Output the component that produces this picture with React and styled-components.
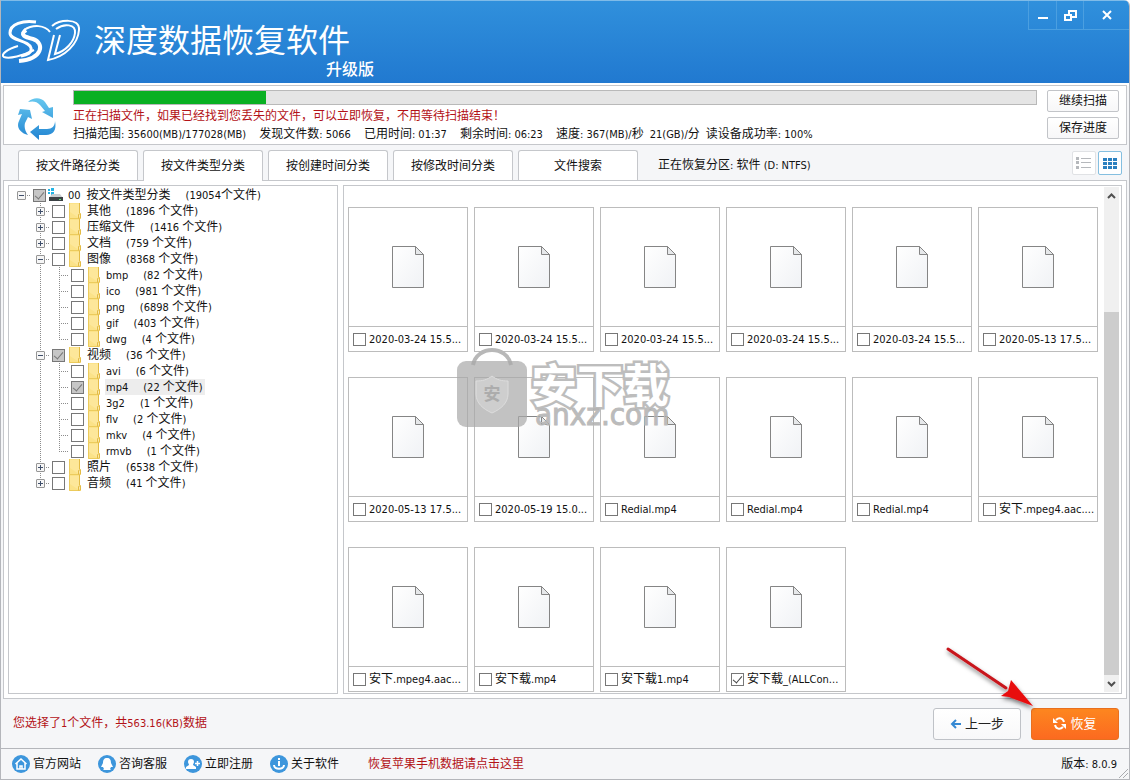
import React from "react";
import styled, { createGlobalStyle } from "styled-components";

const GlobalStyle = createGlobalStyle`
  * {
    box-sizing: border-box;
  }

  body {
    margin: 0;
    color: #111111;
    font-family: "DejaVu Sans Condensed", "Noto Sans CJK SC", sans-serif;
    font-size: 12px;
    line-height: 16px;
  }

  button, input {
    font: inherit;
    color: inherit;
    margin: 0;
    padding: 0;
  }
`;

const Window = styled.div`
  min-height: 100vh;
  display: flex;
  flex-direction: column;
  border: 1px solid #b4b6bb;
  border-top: 0;
  border-radius: 0 6px 0 0;
  background-color: #f5f6f8;
  overflow: hidden;
`;

const Header = styled.header`
  display: flex;
  align-items: flex-start;
  height: 83px;
  border-top: 1px solid #7fbbe8;
  background: linear-gradient(#3090dc, #2179d0);
  color: #ffffff;
`;

const Logo = styled.svg`
  width: 80px;
  height: 44px;
  margin-top: 18px;
`;

const Brand = styled.div`
  display: flex;
  flex-direction: column;
  width: 280px;
  margin: 17px 0 0 13px;
  font-family: "Noto Sans CJK SC", sans-serif;
`;

const Title = styled.h1`
  margin: 0;
  font-size: 32px;
  font-weight: 400;
  line-height: 40px;
`;

const Subtitle = styled.span`
  align-self: flex-end;
  font-size: 16px;
  font-weight: 500;
  line-height: 20px;
`;

const WindowButtons = styled.div`
  display: flex;
  margin-left: auto;
  border: 1px solid #4b9fe0;
  border-width: 0 0 1px 1px;
`;

const WindowButton = styled.button`
  display: grid;
  place-items: center;
  width: ${(props) => (props.$wide ? 46 : 27)}px;
  height: 28px;
  border: 0;
  border-left: ${(props) => (props.$first ? "0" : "1px solid #4b9fe0")};
  background: none;
  color: #ffffff;
`;

const Main = styled.main`
  flex: 1;
  display: flex;
  flex-direction: column;
  padding: 2px 2px 0;
  background: linear-gradient(#ffffff 0 3px, #f5f6f8 3px);
`;

const ScanPanel = styled.section`
  display: flex;
  padding: 4px 7px 1px 0;
  border: 1px solid #c5c7cb;
  background-color: #ffffff;
`;

const RecycleIcon = styled.svg`
  width: 40px;
  height: 42px;
  margin: 8px 16px 0 13px;
`;

const ScanBody = styled.div`
  flex: 1;
  min-width: 0;
`;

const Progress = styled.div`
  height: 15px;
  border: 1px solid #b9b9b9;
  background-color: #e5e5e5;
`;

const ProgressFill = styled.div`
  height: 100%;
  background-color: #09b022;
`;

const ScanNotice = styled.p`
  height: 18px;
  margin: 2px 0 0;
  line-height: 18px;
  color: #b31217;
`;

const ScanStats = styled.div`
  display: flex;
  gap: ${(props) => (props.$tight ? 6 : 13)}px;
  height: 18px;
  line-height: 18px;
  white-space: nowrap;
`;

const ScanActions = styled.div`
  display: flex;
  flex-direction: column;
  gap: 5px;
  margin-left: 10px;
`;

const SmallButton = styled.button`
  width: 72px;
  height: 22px;
  border: 1px solid #c2c4c8;
  border-radius: 2px;
  background: linear-gradient(#ffffff, #f7f7f8);
`;

const TabBar = styled.div`
  display: flex;
  align-items: flex-end;
  height: 35px;
  padding: 5px 5px 0 15px;
`;

const Tabs = styled.div`
  display: flex;
  gap: 5px;
`;

const Tab = styled.button`
  position: relative;
  width: 120px;
  height: ${(props) => (props.$active ? 31 : 30)}px;
  margin-bottom: ${(props) => (props.$active ? -1 : 0)}px;
  padding-bottom: ${(props) => (props.$active ? 1 : 0)}px;
  border: 1px solid #c5c7cb;
  border-bottom: 0;
  border-radius: 3px 3px 0 0;
  background-color: #ffffff;
`;

const Partition = styled.span`
  align-self: center;
  margin-left: 20px;
  white-space: nowrap;
`;

const ViewButtons = styled.div`
  display: flex;
  gap: 2px;
  align-self: flex-start;
  margin-left: auto;
  padding-top: 1px;
`;

const ViewButton = styled.button`
  display: grid;
  place-items: center;
  width: 24px;
  height: 24px;
  border: 1px solid ${(props) => (props.$active ? "#84bfe0" : "#e0e2e5")};
  border-radius: 2px;
  background-color: #ffffff;
`;

const Content = styled.section`
  flex: 1;
  display: flex;
  gap: 5px;
  padding: 4px;
  border: 1px solid #c5c7cb;
  background-color: #ffffff;
`;

const TreePanel = styled.div`
  flex: 0 0 330px;
  padding: 1px 3px;
  border: 1px solid #c5c7cb;
`;

const Tree = styled.ul`
  margin: 0;
  padding: 0;
  list-style: none;
`;

const TreeRow = styled.li`
  display: flex;
  align-items: center;
  height: 16px;
  white-space: nowrap;
`;

const dots = (dir) =>
  `repeating-linear-gradient(${dir}, #8c8c8c 0 1px, transparent 1px 2px)`;

const Guide = styled.span`
  flex: none;
  display: grid;
  align-items: center;
  width: 19px;
  height: 16px;
  padding-left: 5px;
  background-image: ${(props) => (props.$line ? dots("180deg") : "none")},
    ${(props) => (props.$branch ? dots("90deg") : "none")};
  background-size: 1px ${(props) => (props.$line === "half" ? 8 : 16)}px,
    10px 1px;
  background-position: 9px 0, 9px 8px;
  background-repeat: no-repeat;
`;

const Toggle = styled.button`
  display: block;
  width: 9px;
  height: 9px;
  border: 1px solid #969696;
  border-radius: 1px;
  background: linear-gradient(#3f4f6b, #3f4f6b) 1px 3px / 5px 1px no-repeat,
    linear-gradient(#3f4f6b, #3f4f6b) 3px 1px / 1px
      ${(props) => (props.$open ? 0 : 5)}px no-repeat,
    #f6f6f6;
`;

const TreeLabel = styled.label`
  display: flex;
  align-items: center;
  height: 16px;
`;

const Checkbox = styled.input`
  flex: none;
  display: grid;
  place-items: center;
  appearance: none;
  width: 13px;
  height: 13px;
  border: 1px solid #777777;
  background-color: ${(props) => (props.$partial ? "#c6c6c6" : "#ffffff")};

  &:checked::after {
    content: "";
    width: 4px;
    height: 8px;
    margin-top: -2px;
    border: solid ${(props) => (props.$partial ? "#777777" : "#444444")};
    border-width: 0 1px 1px 0;
    transform: rotate(40deg);
  }
`;

const TreeCheckbox = styled(Checkbox)`
  margin-left: 2px;
`;

const NodeIcon = styled.svg`
  flex: none;
  width: 16px;
  height: 16px;
  margin: 0 3px 0 2px;
`;

const NodeText = styled.span`
  display: flex;
  gap: ${(props) => (props.$root ? 6 : 15)}px;
  height: 16px;
  padding: 0 2px 0 1px;
  background-color: ${(props) => (props.$selected ? "#ededed" : "transparent")};
`;

const NodeCount = styled.span`
  margin-left: ${(props) => (props.$root ? 9 : 0)}px;
`;

const Latin = styled.span`
  font-size: 11px;
`;

const FilePanel = styled.div`
  position: relative;
  flex: 1;
  display: flex;
  padding: 1px 2px 1px 0;
  border: 1px solid #c5c7cb;
`;

const FileGrid = styled.div`
  flex: 1;
  display: grid;
  grid-template-columns: repeat(auto-fill, 120px);
  align-content: start;
  gap: 25px 6px;
  padding: 20px 4px 0;
`;

const FileCard = styled.label`
  display: flex;
  flex-direction: column;
  height: 145px;
  border: 1px solid #bcbcbc;
`;

const Preview = styled.span`
  flex: 1;
  display: grid;
  place-items: center;
  border-bottom: 1px solid #bcbcbc;
`;

const FileName = styled.span`
  display: flex;
  align-items: center;
  gap: 3px;
  height: 24px;
  padding-left: 4px;
  white-space: nowrap;
`;

const ScrollBar = styled.div`
  display: flex;
  flex-direction: column;
  width: 15px;
  background-color: #f0f0f0;
`;

const ScrollButton = styled.button`
  display: grid;
  place-items: center;
  height: 17px;
  border: 0;
  background: none;
`;

const ScrollTrack = styled.div`
  flex: 1;
  display: flex;
  align-items: flex-end;
`;

const ScrollThumb = styled.div`
  width: 100%;
  background-color: #cdcdcd;
`;

const Watermark = styled.div`
  position: absolute;
  top: 162px;
  left: 113px;
  display: flex;
  gap: 4px;
  pointer-events: none;
`;

const WatermarkText = styled.div`
  display: flex;
  flex-direction: column;
  padding-top: 10px;
  color: rgba(170, 170, 170, 0.8);
`;

const WatermarkName = styled.span`
  font-family: "Noto Sans CJK SC", sans-serif;
  font-size: 46px;
  font-weight: 700;
  line-height: 48px;
  color: #ffffff;
  paint-order: stroke;
  stroke-linejoin: round;
  -webkit-text-stroke: 5px #bdbdbd;
`;

const WatermarkUrl = styled.span`
  padding-left: 4px;
  font-size: 31px;
  line-height: 16px;
  -webkit-text-stroke: 1px #bbbbbb;
`;

const ActionBar = styled.div`
  position: relative;
  display: flex;
  align-items: center;
  gap: 10px;
  height: 49px;
  padding: 0 8px 0 10px;
`;

const Selection = styled.span`
  margin-right: auto;
  color: #b31217;
`;

const ActionButton = styled.button`
  display: flex;
  align-items: center;
  justify-content: center;
  gap: 4px;
  width: 88px;
  height: 32px;
  border: 1px solid ${(props) => (props.$primary ? "#e8701f" : "#bfc2c7")};
  border-radius: 3px;
  background: ${(props) =>
    props.$primary
      ? "linear-gradient(#fd861f, #fc6a20)"
      : "linear-gradient(#ffffff, #f8f8f9)"};
  color: ${(props) => (props.$primary ? "#ffffff" : "#222222")};
  font-size: 13px;
`;

const Arrow = styled.svg`
  position: absolute;
  right: 90px;
  bottom: 34px;
  width: 96px;
  height: 70px;
  pointer-events: none;
`;

const StatusBar = styled.footer`
  position: relative;
  display: flex;
  align-items: center;
  gap: 17px;
  height: 31px;
  padding: 0 12px 0 11px;
  border-top: 1px solid #b4b6bb;
`;

const StatusLink = styled.a`
  display: flex;
  align-items: center;
  gap: 3px;
  color: inherit;
  text-decoration: none;
`;

const PromoLink = styled(StatusLink)`
  margin-left: 12px;
  color: #b31217;
`;

const Version = styled.span`
  margin-left: auto;
`;

const Grip = styled.svg`
  position: absolute;
  right: 1px;
  bottom: 1px;
`;

const stats = [
  "扫描范围: 35600(MB)/177028(MB)",
  "发现文件数: 5066",
  "已用时间: 01:37",
  "剩余时间: 06:23",
];

const speeds = ["速度: 367(MB)/秒", "21(GB)/分", "读设备成功率: 100%"];

const tabs = [
  "按文件路径分类",
  "按文件类型分类",
  "按创建时间分类",
  "按修改时间分类",
  "文件搜索",
];

const nodes = [
  { name: "其他", count: 1896 },
  { name: "压缩文件", count: 1416 },
  { name: "文档", count: 759 },
  {
    name: "图像",
    count: 8368,
    children: [
      { name: "bmp", count: 82 },
      { name: "ico", count: 981 },
      { name: "png", count: 6898 },
      { name: "gif", count: 403 },
      { name: "dwg", count: 4 },
    ],
  },
  {
    name: "视频",
    count: 36,
    partial: true,
    children: [
      { name: "avi", count: 6 },
      { name: "mp4", count: 22, partial: true, selected: true },
      { name: "3g2", count: 1 },
      { name: "flv", count: 2 },
      { name: "mkv", count: 4 },
      { name: "rmvb", count: 1 },
    ],
  },
  { name: "照片", count: 6538 },
  { name: "音频", count: 41 },
];

const files = [
  "2020-03-24 15.5...",
  "2020-03-24 15.5...",
  "2020-03-24 15.5...",
  "2020-03-24 15.5...",
  "2020-03-24 15.5...",
  "2020-05-13 17.5...",
  "2020-05-13 17.5...",
  "2020-05-19 15.0...",
  "Redial.mp4",
  "Redial.mp4",
  "Redial.mp4",
  "安下.mpeg4.aac....",
  "安下.mpeg4.aac...",
  "安下载.mp4",
  "安下载1.mp4",
  "安下载_(ALLCon...",
];

// Latin runs are set one size smaller than the Chinese around them
function Mixed({ text }) {
  return (
    <span>
      {text
        .split(/([\x20-\x7e]+)/)
        .map((part, i) => (i % 2 ? <Latin key={i}>{part}</Latin> : part))}
    </span>
  );
}

function FolderIcon() {
  return (
    <NodeIcon viewBox="0 0 16 16">
      <path d="M2 0h11v11h1v5H2z" fill="#fbe288" />
      <path d="M2.5 0v15.5h9" fill="none" stroke="#eccb5c" />
      <path d="M3 1h9v14L3 9z" fill="#fdeaa2" opacity="0.7" />
      <path d="M12.5 0v10M11.5 15.5v-4l2-1v4.5z" fill="#fbe9a8" stroke="#e3bb45" />
    </NodeIcon>
  );
}

function DriveIcon() {
  return (
    <NodeIcon viewBox="0 0 16 16">
      <path d="M0 2h2v2H0zM3 1h3v3H3zM0 5h2v2H0zM3 5h3v3H3z" fill="#22b4e6" />
      <path d="M4 7h8l3 4H1z" fill="#c9cdd0" />
      <path d="M1 10h14v4H1z" fill="#3b4144" />
      <path d="M11 12h2v1h-2z" fill="#5ee27c" />
    </NodeIcon>
  );
}

function FileIcon() {
  return (
    <svg width="34" height="44" viewBox="0 0 34 44">
      <defs>
        <linearGradient id="paper" x1="0" y1="0" x2="1" y2="1">
          <stop offset="0" stopColor="#ffffff" />
          <stop offset="1" stopColor="#f0f2f5" />
        </linearGradient>
      </defs>
      <path
        d="M1.5 1.5h23l8 8v33h-31z"
        fill="url(#paper)"
        stroke="#858585"
      />
      <path d="M24.5 1.5v8h8z" fill="#e6e8ea" stroke="#858585" />
    </svg>
  );
}

function TreeNode({ node, nested, last }) {
  return (
    <TreeRow>
      <Guide />
      {nested && <Guide $line="full" />}
      <Guide $line={last ? "half" : "full"} $branch>
        {!nested && (
          <Toggle $open={Boolean(node.children)} aria-label={node.name} />
        )}
      </Guide>
      <TreeLabel>
        <TreeCheckbox
          type="checkbox"
          $partial={node.partial}
          defaultChecked={node.partial}
        />
        <FolderIcon />
        <NodeText $selected={node.selected}>
          <Mixed text={node.name} />
          <Mixed text={`(${node.count} 个文件)`} />
        </NodeText>
      </TreeLabel>
    </TreeRow>
  );
}

function FileTree() {
  return (
    <TreePanel>
      <Tree>
        <TreeRow>
          <Guide $branch>
            <Toggle $open aria-label="按文件类型分类" />
          </Guide>
          <TreeLabel>
            <TreeCheckbox type="checkbox" $partial defaultChecked />
            <DriveIcon />
            <NodeText $root>
              <Mixed text="00" />
              <span>按文件类型分类</span>
              <NodeCount $root>
                <Mixed text="(19054个文件)" />
              </NodeCount>
            </NodeText>
          </TreeLabel>
        </TreeRow>
        {nodes.map((node, i) => (
          <React.Fragment key={node.name}>
            <TreeNode node={node} last={i === nodes.length - 1} />
            {(node.children || []).map((child, j) => (
              <TreeNode
                key={child.name}
                node={child}
                nested
                last={j === node.children.length - 1}
              />
            ))}
          </React.Fragment>
        ))}
      </Tree>
    </TreePanel>
  );
}

function FileList() {
  return (
    <FilePanel>
      <FileGrid>
        {files.map((name, i) => (
          <FileCard key={i}>
            <Preview>
              <FileIcon />
            </Preview>
            <FileName>
              <Checkbox
                type="checkbox"
                defaultChecked={i === files.length - 1}
              />
              <Mixed text={name} />
            </FileName>
          </FileCard>
        ))}
      </FileGrid>
      <ScrollBar>
        <ScrollButton aria-label="向上">
          <svg width="9" height="6" viewBox="0 0 9 6">
            <path d="M1 5l3.500-3.500L8 5" fill="none" stroke="#505050" strokeWidth="2" />
          </svg>
        </ScrollButton>
        <ScrollTrack>
          <ScrollThumb style={{ height: "77%" }} />
        </ScrollTrack>
        <ScrollButton aria-label="向下">
          <svg width="9" height="6" viewBox="0 0 9 6">
            <path d="M1 1l3.500 3.500L8 1" fill="none" stroke="#505050" strokeWidth="2" />
          </svg>
        </ScrollButton>
      </ScrollBar>
      <Watermark>
        <svg width="70" height="80" viewBox="0 0 70 80">
          <path
            d="M16 17C20-3 50-3 54 17"
            fill="none"
            stroke="#b8b8b8"
            strokeWidth="4"
          />
          <rect y="13" width="70" height="66" rx="9" fill="#a8a8a8" opacity="0.7" />
          <path
            d="M35 28c5 4 10 5 16 5v13c0 9-7 15-16 19-9-4-16-10-16-19V33c6 0 11-1 16-5z"
            fill="#cecece"
            stroke="#dddddd"
          />
          <text
            x="35"
            y="52"
            textAnchor="middle"
            fontFamily="Noto Sans CJK SC"
            fontSize="17"
            fontWeight="700"
            fill="#acacac"
          >
            安
          </text>
        </svg>
        <WatermarkText>
          <WatermarkName>安下载</WatermarkName>
          <WatermarkUrl>anxz.com</WatermarkUrl>
        </WatermarkText>
      </Watermark>
    </FilePanel>
  );
}

function StatusIcon({ children }) {
  return (
    <svg width="18" height="18" viewBox="0 0 18 18">
      <circle cx="9" cy="9" r="9" fill="#3d96dc" />
      {children}
    </svg>
  );
}

function App() {
  return (
    <>
      <GlobalStyle />
      <Window>
        <Header>
          <Logo viewBox="0 0 80 44" fill="none" stroke="#ffffff" strokeWidth="2">
            <path d="M35 3C22 1 9 5 9 14c0 8 19 7 21 15 1 5-4 7-10 8" strokeWidth="3" />
            <path d="M25 11c-7 5-1 7 7 9 12 4 10 20-14 22" strokeWidth="4" />
            <path d="M23 11c9-6 21-5 26 2" />
            <path d="M17 27C6 30-1 36 3 38c5 2 19-1 30-7" />
            <path d="M51 7C58 1 79-2 78 11c-1 14-14 27-31 30l6-25" />
            <path d="M55 10c8-6 20-5 19 4-1 9-9 18-20 21l5-19" />
          </Logo>
          <Brand>
            <Title>深度数据恢复软件</Title>
            <Subtitle>升级版</Subtitle>
          </Brand>
          <WindowButtons>
            <WindowButton $first aria-label="最小化">
              <svg width="12" height="12" viewBox="0 0 12 12">
                <path d="M1 8h10v2H1z" fill="currentColor" />
              </svg>
            </WindowButton>
            <WindowButton aria-label="还原">
              <svg width="13" height="11" viewBox="0 0 13 11" fill="none" stroke="currentColor" strokeWidth="2">
                <path d="M5 4V1h7v6H8" />
                <path d="M1 5h6v5H1z" />
              </svg>
            </WindowButton>
            <WindowButton $wide aria-label="关闭">
              <svg width="10" height="10" viewBox="0 0 10 10" stroke="currentColor" strokeWidth="2">
                <path d="M1 1l8 8M9 1L1 9" />
              </svg>
            </WindowButton>
          </WindowButtons>
        </Header>
        <Main>
          <ScanPanel>
            <RecycleIcon viewBox="0 0 40 42">
              <defs>
                <linearGradient id="recycle" gradientUnits="userSpaceOnUse" x1="0" y1="0" x2="0" y2="42">
                  <stop offset="0" stopColor="#67c8ef" />
                  <stop offset="1" stopColor="#2184d2" />
                </linearGradient>
              </defs>
              <g fill="url(#recycle)">
                <path d="M11 4C16-1 24-1 28 4l4 6 4-1v11l-11-6 3-1-5-6C20 3 15 3 11 4z" />
                <path d="M3 11l10 1 2 9-4-2-3 6c-1 4 0 8 3 12C3 35-1 29 2 23l3-7-4 1z" />
                <path d="M38 23c2 9-2 14-9 14h-7v5l-9-8 9-7v4h8c5 0 8-3 8-8z" />
              </g>
            </RecycleIcon>
            <ScanBody>
              <Progress>
                <ProgressFill style={{ width: "20%" }} />
              </Progress>
              <ScanNotice>
                正在扫描文件，如果已经找到您丢失的文件，可以立即恢复，不用等待扫描结束！
              </ScanNotice>
              <ScanStats>
                {stats.map((text) => (
                  <Mixed key={text} text={text} />
                ))}
                <ScanStats $tight>
                  {speeds.map((text) => (
                    <Mixed key={text} text={text} />
                  ))}
                </ScanStats>
              </ScanStats>
            </ScanBody>
            <ScanActions>
              <SmallButton>继续扫描</SmallButton>
              <SmallButton>保存进度</SmallButton>
            </ScanActions>
          </ScanPanel>
          <TabBar>
            <Tabs>
              {tabs.map((name, i) => (
                <Tab key={name} $active={i === 1}>
                  {name}
                </Tab>
              ))}
            </Tabs>
            <Partition>
              <Mixed text="正在恢复分区: 软件 (D: NTFS)" />
            </Partition>
            <ViewButtons>
              <ViewButton aria-label="列表">
                <svg width="16" height="12" viewBox="0 0 16 12" fill="#b5b8bc">
                  <path d="M0 0h3v3H0zM0 4h3v3H0zM0 9h3v3H0zM5 1h10v1H5zM5 5h10v1H5zM5 10h10v1H5z" />
                </svg>
              </ViewButton>
              <ViewButton $active aria-label="缩略图">
                <svg width="14" height="11" viewBox="0 0 14 11" fill="#2b80c0">
                  <path d="M0 0h4v3H0zM5 0h4v3H5zM10 0h4v3h-4zM0 4h4v3H0zM5 4h4v3H5zM10 4h4v3h-4zM0 8h4v3H0zM5 8h4v3H5zM10 8h4v3h-4z" />
                </svg>
              </ViewButton>
            </ViewButtons>
          </TabBar>
          <Content>
            <FileTree />
            <FileList />
          </Content>
          <ActionBar>
            <Selection>
              <Mixed text="您选择了1个文件，共563.16(KB)数据" />
            </Selection>
            <ActionButton>
              <svg width="11" height="10" viewBox="0 0 11 10" fill="none" stroke="#3589d3" strokeWidth="2">
                <path d="M11 5H2M6 1L2 5l4 4" />
              </svg>
              上一步
            </ActionButton>
            <ActionButton $primary>
              <svg width="13" height="13" viewBox="0 0 13 13" fill="none" stroke="currentColor" strokeWidth="2">
                <path d="M3 3c3-3 7-2 8 2M10 10c-3 3-7 2-8-2" />
                <path d="M0 1v5h5zM13 12V7H8z" fill="currentColor" stroke="none" />
              </svg>
              恢复
            </ActionButton>
            <Arrow viewBox="0 0 96 70">
              <defs>
                <filter id="shadow" x="-20%" y="-20%" width="140%" height="150%">
                  <feDropShadow dx="1" dy="3" stdDeviation="2" floodOpacity="0.5" />
                </filter>
              </defs>
              <g filter="url(#shadow)">
                <path d="M7 5l58 39" stroke="#c8141b" strokeWidth="3" strokeLinecap="round" />
                <path d="M92 62l-24-9-8-1 7-5 3-11z" fill="#e80c10" />
              </g>
            </Arrow>
          </ActionBar>
        </Main>
        <StatusBar>
          <StatusLink href="#site">
            <StatusIcon>
              <path d="M3.500 9L9 4l5.500 5M5 8v6h8V8M8 14v-3h2v3" fill="none" stroke="#ffffff" strokeWidth="1.500" />
            </StatusIcon>
            官方网站
          </StatusLink>
          <StatusLink href="#service">
            <StatusIcon>
              <path d="M9 3c3 0 4 2 4 5l2 4-2 0-1 2 1 1H5l1-1-1-2H3l2-4c0-3 1-5 4-5z" fill="#ffffff" />
            </StatusIcon>
            咨询客服
          </StatusLink>
          <StatusLink href="#register">
            <StatusIcon>
              <path d="M7 4c2 0 3 1 3 3 0 1-1 2-1 3l3 2v2H2v-2l3-2C5 9 4 8 4 7c0-2 1-3 3-3z" fill="#ffffff" />
              <path d="M13.500 6v5M11 8.500h5" stroke="#ffffff" strokeWidth="1.500" />
            </StatusIcon>
            立即注册
          </StatusLink>
          <StatusLink href="#about">
            <StatusIcon>
              <path d="M8 3h2v2H8zM8 6h2v5H8z" fill="#ffffff" />
              <path d="M4 10c0 5 10 5 10 0" fill="none" stroke="#ffffff" strokeWidth="2" />
            </StatusIcon>
            关于软件
          </StatusLink>
          <PromoLink href="#apple">恢复苹果手机数据请点击这里</PromoLink>
          <Version>
            <Mixed text="版本: 8.0.9" />
          </Version>
          <Grip width="10" height="10" viewBox="0 0 10 10" stroke="#a9abaf">
            <path d="M1 10l9-9M5 10l5-5" />
          </Grip>
        </StatusBar>
      </Window>
    </>
  );
}

export default App;
